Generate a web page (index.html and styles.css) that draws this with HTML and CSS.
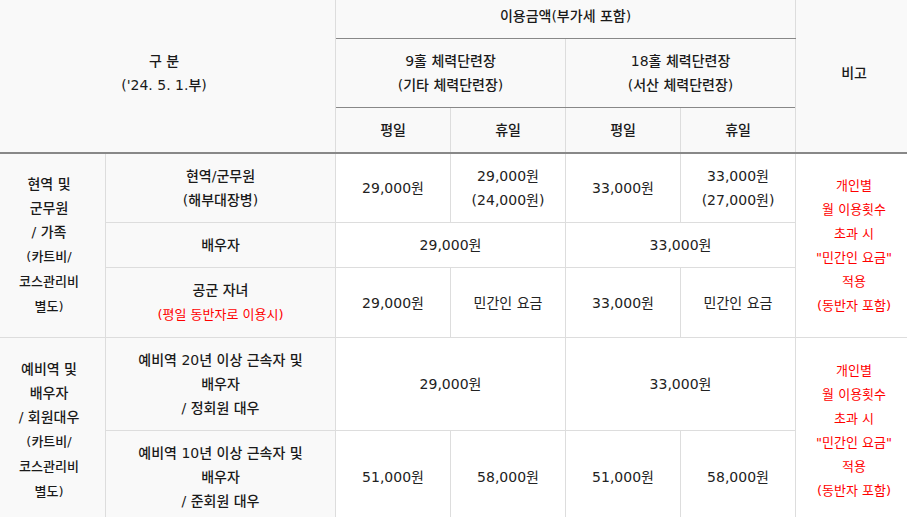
FILE: index.html
```html
<!DOCTYPE html>
<html lang="ko">
<head>
<meta charset="utf-8">
<title>이용금액</title>
<link rel="stylesheet" href="styles.css">
</head>
<body>
<table class="fee">
  <colgroup>
    <col class="c-a"><col class="c-b"><col class="c-p"><col class="c-p"><col class="c-p"><col class="c-p"><col class="c-n">
  </colgroup>
  <thead>
    <tr>
      <th rowspan="3" colspan="2">구 분<br>('24. 5. 1.부)</th>
      <th colspan="4" class="dk">이용금액(부가세 포함)</th>
      <th rowspan="3">비고</th>
    </tr>
    <tr>
      <th colspan="2" class="dk">9홀 체력단련장<br>(기타 체력단련장)</th>
      <th colspan="2" class="dk">18홀 체력단련장<br>(서산 체력단련장)</th>
    </tr>
    <tr class="last">
      <th>평일</th><th>휴일</th><th>평일</th><th>휴일</th>
    </tr>
  </thead>
  <tbody>
    <tr>
      <th rowspan="3" class="grp">현역 및<br>군무원<br>/ 가족<br><span class="sm">(카트비/<br>코스관리비<br>별도)</span></th>
      <th>현역/군무원<br>(해부대장병)</th>
      <td>29,000원</td>
      <td>29,000원<br>(24,000원)</td>
      <td>33,000원</td>
      <td>33,000원<br>(27,000원)</td>
      <td rowspan="3" class="note">개인별<br>월 이용횟수<br>초과 시<br>"민간인 요금"<br>적용<br>(동반자 포함)</td>
    </tr>
    <tr>
      <th>배우자</th>
      <td colspan="2">29,000원</td>
      <td colspan="2">33,000원</td>
    </tr>
    <tr>
      <th>공군 자녀<br><span class="red">(평일 동반자로 이용시)</span></th>
      <td>29,000원</td>
      <td>민간인 요금</td>
      <td>33,000원</td>
      <td>민간인 요금</td>
    </tr>
    <tr>
      <th rowspan="2" class="grp">예비역 및<br>배우자<br>/ 회원대우<br><span class="sm">(카트비/<br>코스관리비<br>별도)</span></th>
      <th>예비역 20년 이상 근속자 및<br>배우자<br>/ 정회원 대우</th>
      <td colspan="2">29,000원</td>
      <td colspan="2">33,000원</td>
      <td rowspan="2" class="note">개인별<br>월 이용횟수<br>초과 시<br>"민간인 요금"<br>적용<br>(동반자 포함)</td>
    </tr>
    <tr>
      <th>예비역 10년 이상 근속자 및<br>배우자<br>/ 준회원 대우</th>
      <td>51,000원</td>
      <td>58,000원</td>
      <td>51,000원</td>
      <td>58,000원</td>
    </tr>
  </tbody>
</table>
</body>
</html>
```
FILE: styles.css
```css
html, body {
  margin: 0;
  padding: 0;
  background: #fff;
}
body {
  font-family: "DejaVu Sans", "Noto Sans CJK KR", sans-serif;
  font-size: 14px;
  color: #222;
  overflow: hidden;
}
.fee {
  border-collapse: collapse;
  table-layout: fixed;
  width: 920px;
  margin: -6px 0 0 -8px;
}
.c-a { width: 113px; }
.c-b { width: 230px; }
.c-p { width: 115px; }
.c-n { width: 117px; }
.fee th, .fee td {
  border: 1px solid #ddd;
  padding: 10px 4px;
  line-height: 24px;
  text-align: center;
  vertical-align: middle;
}
.fee th {
  font-weight: 500;
  background: #f9f9f9;
  color: #1a1a1a;
}
.fee td {
  font-weight: 400;
  background: #fff;
}
.fee thead th {
  border-top: 0;
}
.fee thead th.dk {
  border-bottom: 1px solid #888;
}
.fee thead tr.last th,
.fee thead th[rowspan="3"] {
  border-bottom: 2px solid #888;
}
.fee .grp {
  padding-left: 2px;
  padding-right: 2px;
}
.sm {
  font-size: 13px;
}
.red {
  font-size: 13px;
  color: #f00;
  font-weight: 400;
}
.fee td.note {
  font-size: 13px;
  color: #f00;
}
```
